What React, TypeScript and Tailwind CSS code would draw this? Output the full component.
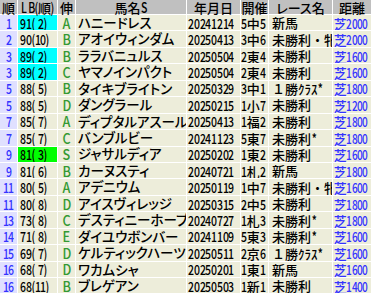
type Row = {
  rank: string
  lb: string
  lbBg?: string
  grade: string
  name: string
  date: string
  venue: string
  race: string
  dist: string
}

const rows: Row[] = [
  { rank: '1', lb: '91( 2)', lbBg: 'bg-[#00ffff]', grade: 'A', name: 'ハニードレス', date: '20241214', venue: '5中5', race: '新馬', dist: '芝2000' },
  { rank: '2', lb: '90(10)', grade: 'B', name: 'アオイウィンダム', date: '20250413', venue: '3中6', race: '未勝利・牝', dist: '芝2000' },
  { rank: '3', lb: '89( 2)', lbBg: 'bg-[#00ffff]', grade: 'B', name: 'ララバニュルス', date: '20250504', venue: '2東4', race: '未勝利', dist: '芝1600' },
  { rank: '3', lb: '89( 2)', lbBg: 'bg-[#00ffff]', grade: 'C', name: 'ヤマノインパクト', date: '20250504', venue: '2東4', race: '未勝利', dist: '芝1600' },
  { rank: '5', lb: '88( 5)', grade: 'B', name: 'タイキブライトン', date: '20250329', venue: '3中1', race: '１勝ｸﾗｽ*', dist: '芝1800' },
  { rank: '5', lb: '88( 5)', grade: 'D', name: 'ダングラール', date: '20250215', venue: '1小7', race: '未勝利', dist: '芝1200' },
  { rank: '7', lb: '85( 7)', grade: 'A', name: 'ディプタルアスール', date: '20250413', venue: '1福2', race: '未勝利', dist: '芝1800' },
  { rank: '7', lb: '85( 7)', grade: 'C', name: 'バンブルビー', date: '20241123', venue: '5東7', race: '未勝利*', dist: '芝1800' },
  { rank: '9', lb: '81( 3)', lbBg: 'bg-[#00ff00]', grade: 'S', name: 'ジャサルディア', date: '20250202', venue: '1東2', race: '未勝利', dist: '芝1600' },
  { rank: '9', lb: '81( 6)', grade: 'B', name: 'カーヌスティ', date: '20240721', venue: '1札2', race: '新馬', dist: '芝1800' },
  { rank: '11', lb: '80( 5)', grade: 'A', name: 'アデニウム', date: '20250119', venue: '1中7', race: '未勝利・牝', dist: '芝1600' },
  { rank: '11', lb: '80( 8)', grade: 'D', name: 'アイスヴィレッジ', date: '20250315', venue: '2中5', race: '未勝利', dist: '芝1800' },
  { rank: '13', lb: '73( 8)', grade: 'C', name: 'デスティニーホープ', date: '20240727', venue: '1札3', race: '未勝利*', dist: '芝1800' },
  { rank: '14', lb: '71( 8)', grade: 'E', name: 'ダイユウボンバー', date: '20241109', venue: '5東3', race: '未勝利*', dist: '芝1600' },
  { rank: '15', lb: '69( 7)', grade: 'D', name: 'ケルティックハーツ', date: '20250511', venue: '2京6', race: '１勝ｸﾗｽ*', dist: '芝1600' },
  { rank: '16', lb: '68( 7)', grade: 'D', name: 'ワカムシャ', date: '20250201', venue: '1東1', race: '新馬', dist: '芝1600' },
  { rank: '16', lb: '68(11)', grade: 'B', name: 'ブレゲアン', date: '20250503', venue: '1新1', race: '未勝利', dist: '芝1400' },
]

// narrow widths for half-width glyphs (the screenshot font is condensed)
const charW: Record<string, number> = { '(': 3.2, ')': 3.2, ' ': 3, '*': 6 }

function Narrow({ text, dw = 5.8, squeeze = 'scale-x-75' }: { text: string; dw?: number; squeeze?: string }) {
  return (
    <span className="whitespace-pre">
      {[...text].map((c, i) => {
        if (c.charCodeAt(0) > 127) return <span key={i}>{c}</span>
        const w = /\d/.test(c) ? dw : charW[c] ?? 7
        return (
          <span key={i} className="inline-flex justify-center text-[14px]" style={{ width: w }}>
            <span className={`inline-block ${squeeze}`}>{c}</span>
          </span>
        )
      })}
    </span>
  )
}

const cell = 'bg-[#ededda] flex items-center whitespace-nowrap overflow-hidden'

export default function App() {
  return (
    <div className="w-[371px] h-[296px] bg-white overflow-hidden text-[13px] font-medium text-black font-['Noto_Sans_CJK_JP',sans-serif]">
      <div className="grid grid-cols-[17px_39px_17px_110px_53px_27px_63px_1fr] grid-rows-[14px] auto-rows-[15.45px] gap-px leading-none">
        <div className="bg-[#c0c0c0] flex items-center justify-center">順</div>
        <div className="bg-[#c0c0c0] flex items-center justify-center whitespace-nowrap">
          <Narrow text="LB(" dw={6} />順<Narrow text=")" />
        </div>
        <div className="bg-[#c0c0c0] flex items-center justify-center">伸</div>
        <div className="bg-[#c0c0c0] flex items-center justify-center whitespace-nowrap">
          馬名<Narrow text="S" />
        </div>
        <div className="bg-[#c0c0c0] flex items-center justify-center">年月日</div>
        <div className="bg-[#c0c0c0] flex items-center justify-center">開催</div>
        <div className="bg-[#c0c0c0] flex items-center justify-center [font-feature-settings:'palt']">レース名</div>
        <div className="bg-[#c0c0c0] flex items-center justify-center">距離</div>

        {rows.map((r, i) => (
          <div key={i} className="contents">
            <div className="bg-[#e0e0ff] text-[#3333ff] flex items-center justify-center">
              <Narrow text={r.rank} />
            </div>
            <div className={`${r.lbBg ?? 'bg-[#ededda]'} flex items-center pl-[2px] overflow-hidden`}>
              <Narrow text={r.lb} />
            </div>
            <div className="bg-[#ededda] text-[#339933] flex items-center justify-center text-[14px]">
              <span className="inline-block scale-x-90">{r.grade}</span>
            </div>
            <div className={`${cell} pl-[2px] text-[13.5px] [font-feature-settings:'palt']`}>{r.name}</div>
            <div className={`${cell} pl-px`}>
              <Narrow text={r.date} />
            </div>
            <div className={cell}>
              <Narrow text={r.venue} />
            </div>
            <div className={`${cell} pl-[3px]`}>
              <Narrow text={r.race} />
            </div>
            <div className={`${cell} text-[#3333ff] justify-end pr-[3px]`}>
              <Narrow text={r.dist} dw={5.3} squeeze="scale-x-[0.72]" />
            </div>
          </div>
        ))}
      </div>
    </div>
  )
}
